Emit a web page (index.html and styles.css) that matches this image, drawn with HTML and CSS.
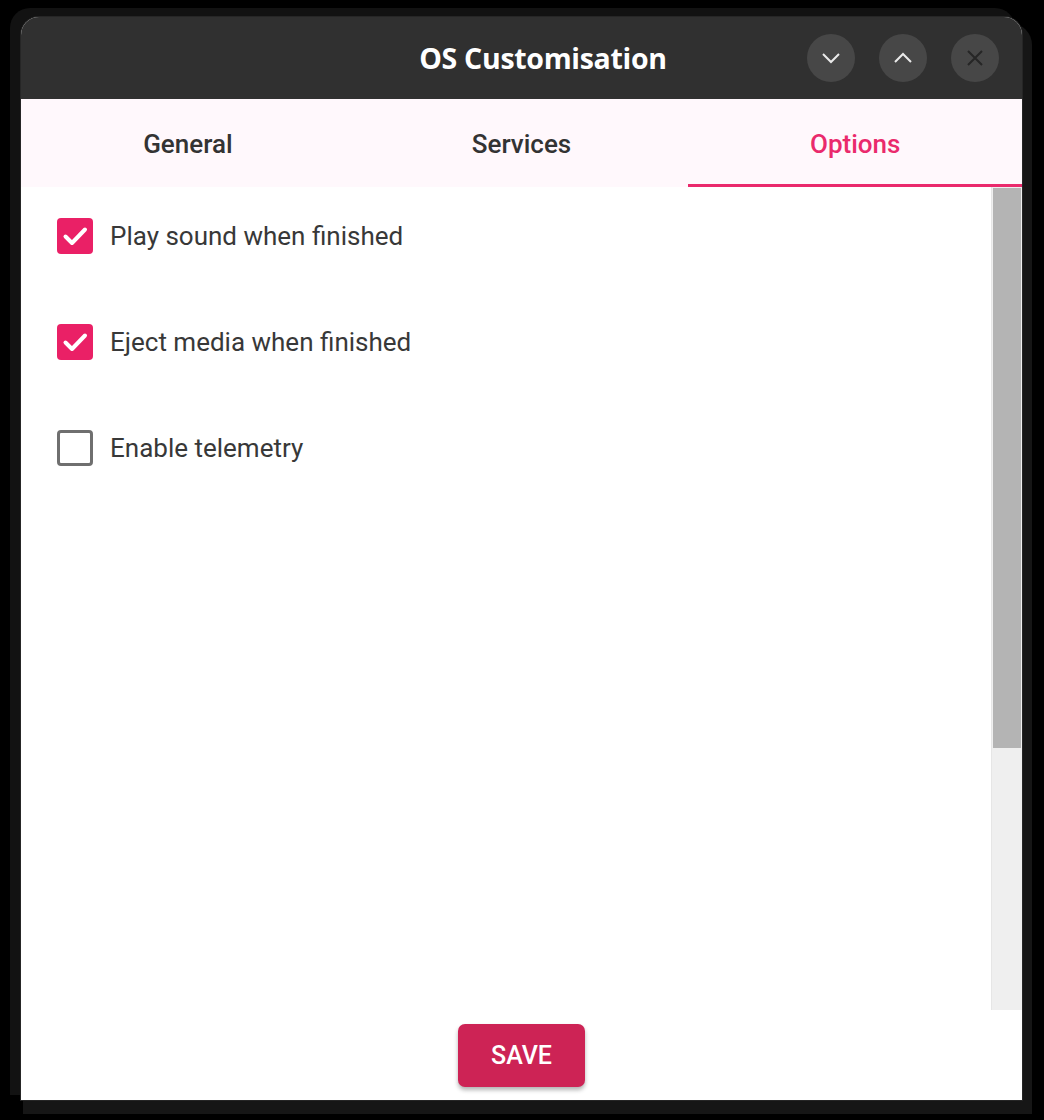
FILE: index.html
```html
<!DOCTYPE html>
<html>
<head>
<meta charset="utf-8">
<link rel="stylesheet" href="styles.css">
</head>
<body>
<div class="backdrop">
  <div class="window">
    <div class="titlebar">
      <div class="title">OS Customisation</div>
      <div class="wbtns">
        <div class="wbtn"><svg width="24" height="24" viewBox="0 0 24 24"><path d="M4 8 L12 16 L20 8" fill="none" stroke="#eaeaea" stroke-width="2"/></svg></div>
        <div class="wbtn"><svg width="24" height="24" viewBox="0 0 24 24"><path d="M4 16 L12 8 L20 16" fill="none" stroke="#eaeaea" stroke-width="2"/></svg></div>
        <div class="wbtn"><svg width="24" height="24" viewBox="0 0 24 24"><path d="M5 5 L19 19 M19 5 L5 19" fill="none" stroke="#262626" stroke-width="2"/></svg></div>
      </div>
    </div>
    <div class="tabs">
      <div class="tab">General</div>
      <div class="tab">Services</div>
      <div class="tab active">Options</div>
    </div>
    <div class="content">
      <div class="list">
        <div class="row">
          <span class="cb checked"><svg width="36" height="36" viewBox="0 0 36 36"><path d="M8.5 18.5 L15 25 L28 11.5" fill="none" stroke="#fff" stroke-width="4" stroke-linecap="round" stroke-linejoin="round"/></svg></span>
          <span class="label">Play sound when finished</span>
        </div>
        <div class="row">
          <span class="cb checked"><svg width="36" height="36" viewBox="0 0 36 36"><path d="M8.5 18.5 L15 25 L28 11.5" fill="none" stroke="#fff" stroke-width="4" stroke-linecap="round" stroke-linejoin="round"/></svg></span>
          <span class="label">Eject media when finished</span>
        </div>
        <div class="row">
          <span class="cb"></span>
          <span class="label">Enable telemetry</span>
        </div>
      </div>
      <div class="scrollbar">
        <div class="thumb"></div>
      </div>
    </div>
    <div class="footer">
      <button class="save">SAVE</button>
    </div>
  </div>
</div>
</body>
</html>
```
FILE: styles.css
```css
html, body {
  margin: 0;
  padding: 0;
  background: #000;
}
.backdrop {
  width: 1044px;
  height: 1120px;
  box-sizing: border-box;
  padding: 17px 0 0 21px;
  background: #000;
}
.window {
  width: 1001px;
  height: 1083px;
  display: flex;
  flex-direction: column;
  border-radius: 18px 18px 0 0;
  overflow: hidden;
  background: #fff;
  box-shadow: 0 0 0 1px #262626, -9px -7px 0 2px #121212, 6px 10px 0 4px #161616;
}
.titlebar {
  height: 82px;
  flex: none;
  background: #303030;
  display: flex;
  align-items: center;
}
.title {
  flex: 1;
  padding-left: 258px;
  text-align: center;
  color: #fff;
  font-family: "Open Sans", "DejaVu Sans", sans-serif;
  font-weight: 700;
  font-size: 28.5px;
  letter-spacing: -0.3px;
}
.wbtns {
  display: flex;
  gap: 24px;
  padding-right: 23px;
}
.wbtn {
  width: 48px;
  height: 48px;
  border-radius: 50%;
  background: #474747;
  display: flex;
  align-items: center;
  justify-content: center;
}
.tabs {
  height: 88px;
  flex: none;
  display: flex;
  background: #fff8fc;
}
.tab {
  flex: 1;
  display: flex;
  align-items: center;
  justify-content: center;
  font-family: Roboto, "Liberation Sans", sans-serif;
  font-weight: 500;
  font-size: 26px;
  color: #333;
  box-sizing: border-box;
  padding-top: 2px;
}
.tab.active {
  color: #ea2a6c;
  border-bottom: 3px solid #ea2a6c;
  padding-top: 5px;
}
.content {
  flex: 1;
  display: flex;
  min-height: 0;
}
.list {
  flex: 1;
  padding: 31px 0 0 36px;
  display: flex;
  flex-direction: column;
  gap: 70px;
}
.row {
  display: flex;
  align-items: center;
  gap: 17px;
  height: 36px;
}
.cb {
  width: 36px;
  height: 36px;
  box-sizing: border-box;
  border-radius: 4px;
  border: 3.5px solid #6f6f6f;
  flex: none;
  display: flex;
}
.cb.checked {
  border: none;
  background: #ea2066;
}
.label {
  font-family: Roboto, "Liberation Sans", sans-serif;
  font-size: 26px;
  color: #383838;
  padding-bottom: 1px;
}
.scrollbar {
  width: 31px;
  flex: none;
  background: #efefef;
  padding: 1px 1px 0 1px;
  box-sizing: border-box;
  display: flex;
  flex-direction: column;
  height: 823px;
  border-left: 1px solid #e6e6e6;
}
.thumb {
  height: 560px;
  background: #b4b4b4;
}
.footer {
  height: 90px;
  flex: none;
  display: flex;
  justify-content: center;
  padding-top: 14px;
  box-sizing: border-box;
}
.save {
  width: 127px;
  height: 63px;
  border: none;
  border-radius: 7px;
  background: #cd2355;
  color: #fff;
  font-family: Roboto, "Liberation Sans", sans-serif;
  font-weight: 500;
  font-size: 25px;
  box-shadow: 0 3px 4px rgba(0,0,0,0.3);
}
```
